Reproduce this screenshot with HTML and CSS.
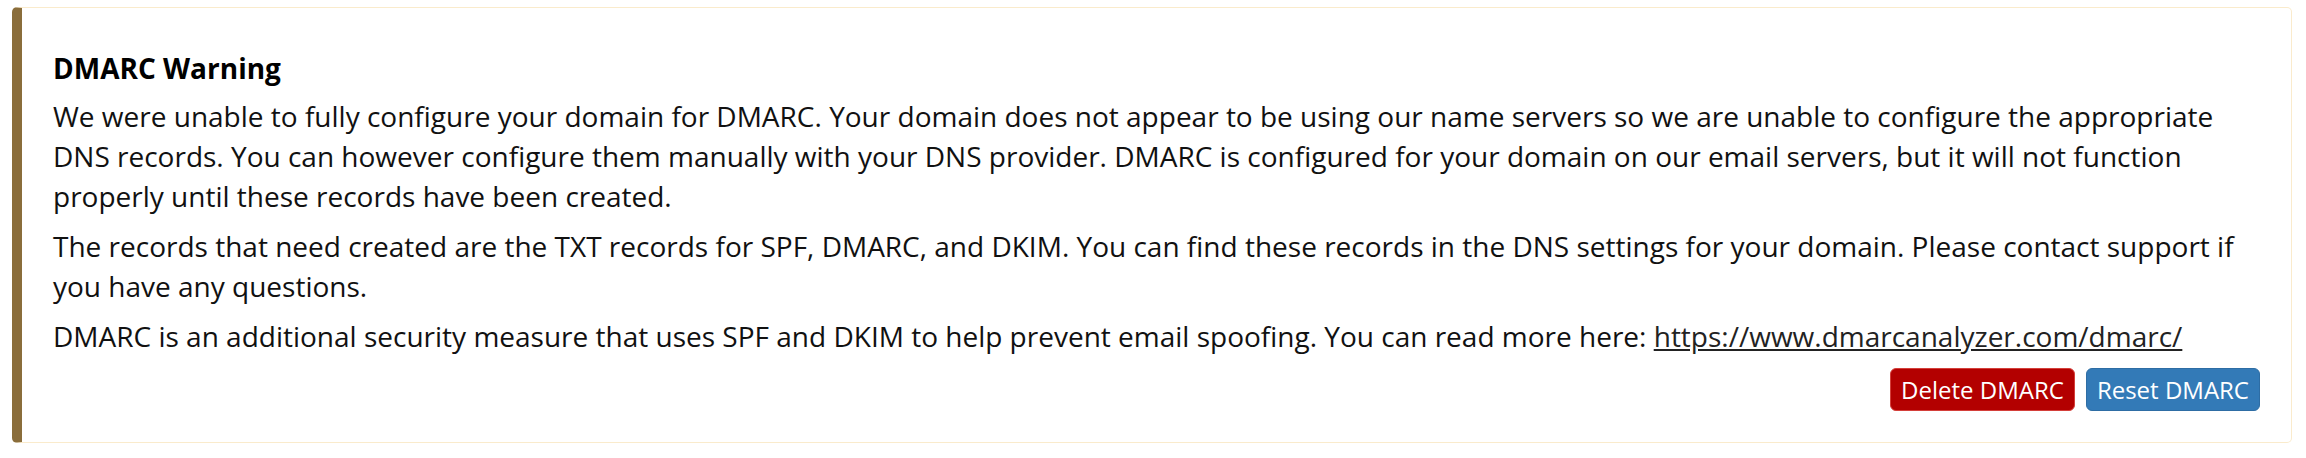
FILE: index.html
```html
<!DOCTYPE html>
<html lang="en">
<head>
<meta charset="utf-8">
<title>DMARC Warning</title>
<link rel="stylesheet" href="styles.css">
</head>
<body>
<div class="page">
  <div class="alert">
    <h4 class="alert-title">DMARC Warning</h4>
    <p class="msg">We were unable to fully configure your domain for DMARC. Your domain does not appear to be using our name servers so we are unable to configure the appropriate DNS records. You can however configure them manually with your DNS provider. DMARC is configured for your domain on our email servers, but it will not function properly until these records have been created.</p>
    <p class="msg">The records that need created are the TXT records for SPF, DMARC, and DKIM. You can find these records in the DNS settings for your domain. Please contact support if you have any questions.</p>
    <p class="msg msg-last">DMARC is an additional security measure that uses SPF and DKIM to help prevent email spoofing. You can read more here: <a class="link" href="#">https://www.dmarcanalyzer.com/dmarc/</a></p>
    <div class="actions">
      <button class="btn btn-danger" type="button">Delete DMARC</button>
      <button class="btn btn-primary" type="button">Reset DMARC</button>
    </div>
  </div>
</div>
</body>
</html>
```
FILE: styles.css
```css
html, body {
  margin: 0;
  padding: 0;
  background: #ffffff;
}

.page {
  padding: 7px 14px 14px 12px;
  font-family: "Open Sans", "Noto Sans", "Liberation Sans", sans-serif;
  color: #111111;
}

.alert {
  background: #ffffff;
  border: 1px solid #faebcc;
  border-left: 10px solid #8a6d3b;
  border-radius: 5px;
  padding: 30px 31px 31px 31px;
}

.alert-title {
  margin: 10px 0 8px 0;
  font-size: 28px;
  line-height: 40px;
  font-weight: 700;
  color: #000000;
}

.msg {
  margin: 0 0 10px 0;
  font-size: 28px;
  line-height: 40px;
  color: #111111;
}

.msg-last {
  margin-bottom: 12px;
}

.link {
  color: #222222;
  text-decoration: underline;
}

.actions {
  display: flex;
  justify-content: flex-end;
  gap: 11px;
}

.btn {
  font-family: "Open Sans", "Noto Sans", "Liberation Sans", sans-serif;
  font-size: 24px;
  line-height: 37px;
  padding: 2px 10px;
  border: 1px solid transparent;
  border-radius: 6px;
  color: #ffffff;
  cursor: pointer;
}

.btn-danger {
  background: #b30000;
  border-color: #d43f3a;
}

.btn-primary {
  background: #337ab7;
  border-color: #2e6da4;
}
```
